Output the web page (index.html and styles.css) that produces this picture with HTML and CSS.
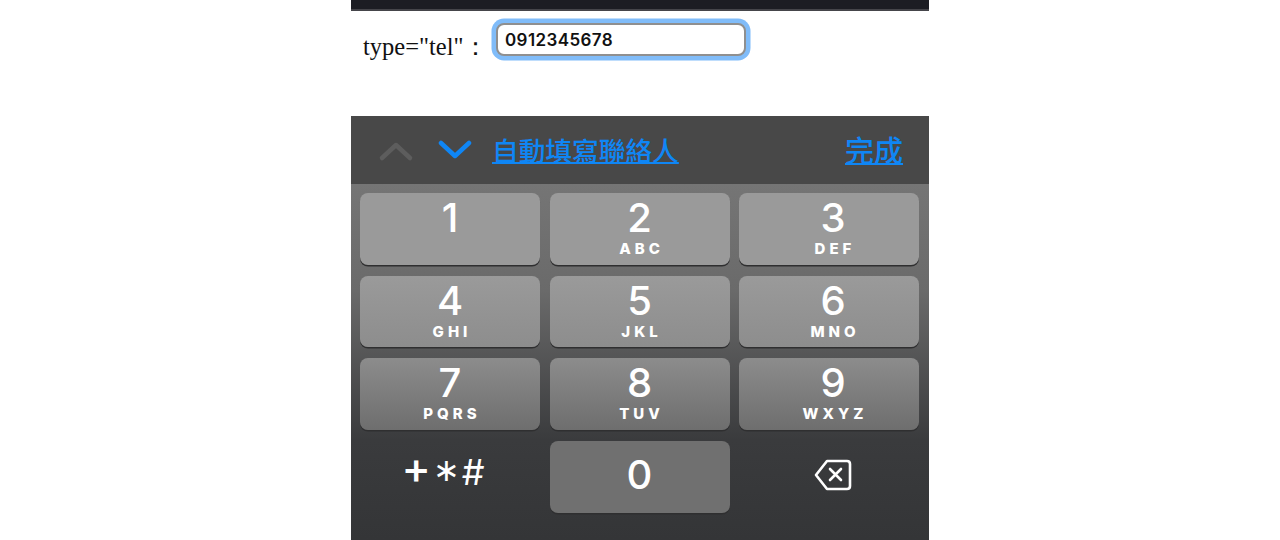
FILE: index.html
```html
<!doctype html>
<html>
<head>
  <link rel="stylesheet" href="styles.css">
</head>
<body>
  <div class="phone">
    <div class="topBar"></div>
    <div class="fieldRow">
      <label class="fieldLabel">type="tel"：</label>
      <input class="telInput" type="text" value="0912345678">
    </div>

    <div class="toolbar">
      <svg class="chevron" width="36" height="24" viewBox="0 0 36 24"><path d="M4 20 L18 7 L32 20" stroke="#5d5d5d"/></svg>
      <svg class="chevron chevronNext" width="36" height="24" viewBox="0 0 36 24"><path d="M3 5 L17 18 L31 5" stroke="#0f86f5"/></svg>
      <a class="toolLink autofill">自動填寫聯絡人</a>
      <a class="toolLink done">完成</a>
    </div>

    <div class="keypad">
      <div class="key rowOne"><span class="digit">1</span></div>
      <div class="key rowOne"><span class="digit">2</span><span class="letters">ABC</span></div>
      <div class="key rowOne right"><span class="digit">3</span><span class="letters">DEF</span></div>
      <div class="key rowTwo"><span class="digit">4</span><span class="letters">GHI</span></div>
      <div class="key rowTwo"><span class="digit">5</span><span class="letters">JKL</span></div>
      <div class="key rowTwo right"><span class="digit">6</span><span class="letters">MNO</span></div>
      <div class="key rowThree"><span class="digit">7</span><span class="letters">PQRS</span></div>
      <div class="key rowThree"><span class="digit">8</span><span class="letters">TUV</span></div>
      <div class="key rowThree right"><span class="digit">9</span><span class="letters">WXYZ</span></div>
      <div class="key plain symbols"><span class="plus">+</span><span class="star">∗</span><span class="hash">#</span></div>
      <div class="key zero"><span class="digit">0</span></div>
      <div class="key plain right">
        <svg class="backspace" width="38" height="32" viewBox="0 0 38 32" fill="none" stroke="#fff" stroke-width="2.6" stroke-linejoin="round" stroke-linecap="round">
          <path d="M13 2 H33 Q36 2 36 5 V27 Q36 30 33 30 H13 L2 16 Z"/>
          <path d="M16 10 L27 21 M27 10 L16 21"/>
        </svg>
      </div>
    </div>
  </div>
</body>
</html>
```
FILE: styles.css
```css
body{
  margin: 0;
  height: 540px;
  overflow: hidden;
  background: #fff;
}
.phone{
  width: 578px;
  height: 540px;
  margin-left: 351px;
  display: flex;
  flex-direction: column;
}
.topBar{
  height: 9px;
  background: #1c1d23;
  border-bottom: 2px solid #45454a;
}
.fieldRow{
  height: 105px;
  display: flex;
  align-items: flex-start;
  padding-left: 12px;
  box-sizing: border-box;
}
.fieldLabel{
  width: 133px;
  margin-top: 19px;
  font-family: "Liberation Serif", serif;
  font-size: 24.5px;
  line-height: 34px;
  color: #111;
  white-space: nowrap;
}
.telInput{
  width: 250px;
  height: 33px;
  margin-top: 12px;
  padding: 0 0 0 7px;
  box-sizing: border-box;
  border: 2px solid #8f8f8f;
  border-radius: 8px;
  box-shadow: 0 0 0 4.5px #80bcf9;
  outline: none;
  background: #fff;
  font-family: Inter, sans-serif;
  font-size: 17px;
  font-weight: 600;
  letter-spacing: 0.4px;
  color: #111;
}
.toolbar{
  height: 68px;
  background: #484848;
  display: flex;
  align-items: center;
  padding: 0 26px 0 27px;
  box-sizing: border-box;
}
.chevron{
  fill: none;
  flex: none;
}
.chevron path{
  stroke-width: 4.5;
  stroke-linecap: round;
  stroke-linejoin: round;
}
.chevronNext{
  margin-left: 24px;
}
.toolLink{
  font-family: "Noto Sans CJK TC", sans-serif;
  font-weight: 500;
  font-size: 26.7px;
  line-height: 34px;
  color: #0f86f5;
  text-decoration: underline;
  text-underline-offset: 1px;
}
.autofill{
  margin-left: 18px;
}
.done{
  margin-left: auto;
  margin-top: -3px;
  font-size: 29px;
}
.keypad{
  flex: 1;
  display: grid;
  grid-template-columns: 180px 180px 180px;
  grid-template-rows: 71.5px 71.5px 71.5px 71.5px;
  column-gap: 9.5px;
  row-gap: 11.2px;
  padding: 9px 0 0 9px;
  box-sizing: border-box;
  background: linear-gradient(to bottom, #757575 0, #6a6a6a 30%, #3a3b3d 72%, #343537 100%);
}
.key{
  border-radius: 8px;
  box-shadow: 0 1.5px 0 #2f2f30;
  display: flex;
  flex-direction: column;
  align-items: center;
  color: #fff;
  font-family: Inter, sans-serif;
}
.rowOne{
  background: #9a9a9a;
}
.rowTwo{
  background: linear-gradient(to bottom, #9a9a9a 0, #8d8d8d 100%);
}
.rowThree{
  background: linear-gradient(to bottom, #8c8c8c 0, #6e6e6e 100%);
}
.right{
  padding-left: 8px;
  box-sizing: border-box;
}
.digit{
  font-size: 40px;
  font-weight: 500;
  line-height: 34px;
  margin-top: 8px;
}
.letters{
  font-size: 15px;
  font-weight: 800;
  line-height: 12px;
  letter-spacing: 4px;
  margin-right: -4px;
  margin-top: 8px;
}
.key.zero{
  background: #707070;
  justify-content: center;
}
.key.zero .digit{
  margin-top: -3px;
}
.key.plain{
  background: none;
  box-shadow: none;
  justify-content: center;
}
.backspace{
  margin-top: -4px;
}
.key.symbols{
  flex-direction: row;
  justify-content: center;
  align-items: center;
  height: 42px;
  padding-right: 14px;
  margin-top: 10px;
  font-weight: 500;
  line-height: 42px;
}
.plus{
  font-size: 44px;
  margin-top: -8px;
}
.star{
  font-size: 32px;
  margin: -4px 2px 0;
}
.hash{
  font-size: 36px;
  font-weight: 400;
}
```
